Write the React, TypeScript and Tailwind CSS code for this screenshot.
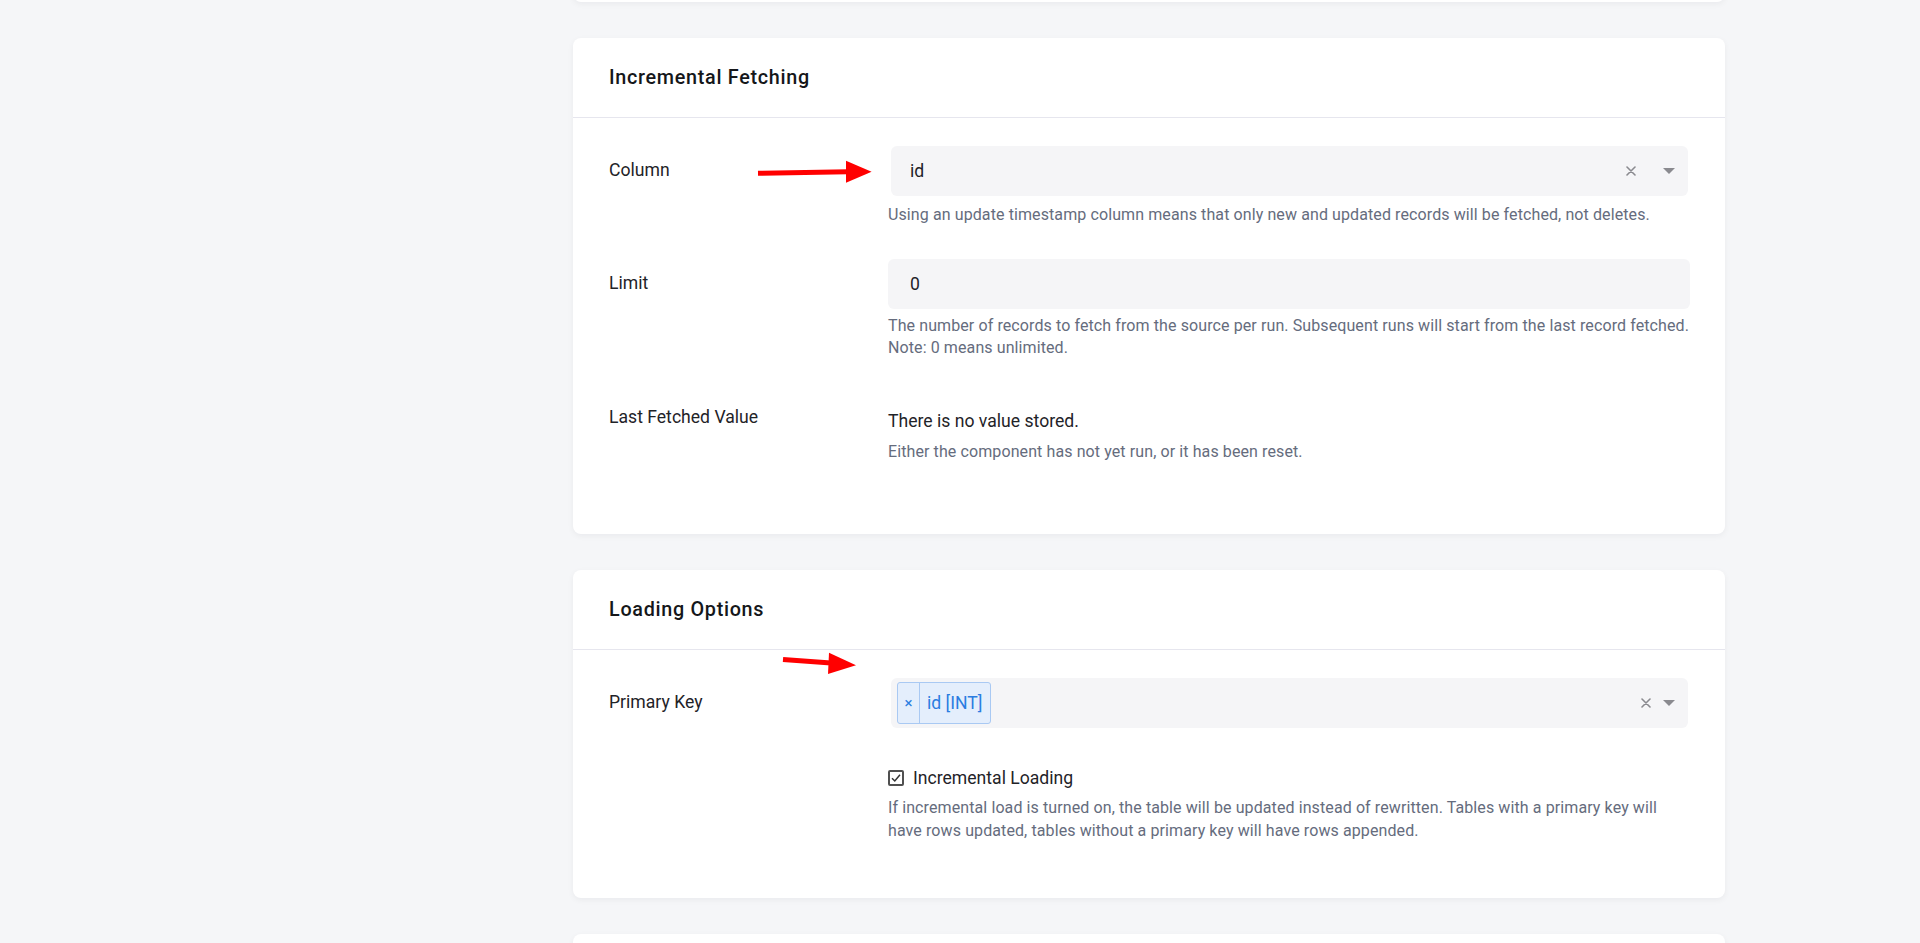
import React from "react";

function XIcon() {
  return (
    <svg width="10" height="10" viewBox="0 0 10 10" className="shrink-0">
      <path d="M1 1L9 9M9 1L1 9" stroke="#8a8a8f" strokeWidth="1.6" strokeLinecap="round" />
    </svg>
  );
}

function Caret() {
  return (
    <svg width="12" height="6" viewBox="0 0 12 6" className="shrink-0">
      <path d="M0 0H12L6 6Z" fill="#8a8a8f" />
    </svg>
  );
}

function Card({ title, children, bodyClass }: { title: string; children: React.ReactNode; bodyClass: string }) {
  return (
    <div className="relative rounded-lg bg-white shadow-[0_2px_6px_rgba(20,20,40,0.05)]">
      <div className="flex h-[79px] items-center border-b border-[#e6e6ee] px-9 box-content">
        <h2 className="text-[19.8px] font-medium tracking-[0.7px] text-[#15171a]">{title}</h2>
      </div>
      <div className={bodyClass}>{children}</div>
    </div>
  );
}

function Row({ label, children, className }: { label: string; children: React.ReactNode; className?: string }) {
  return (
    <div className={"flex " + (className ?? "")}>
      <div className="w-[279px] shrink-0 pt-[12px] text-[17.6px] leading-6 text-[#1f2328]">{label}</div>
      <div className="min-w-0 flex-1">{children}</div>
    </div>
  );
}

export default function App() {
  return (
    <div className="h-[943px] w-full overflow-hidden bg-[#f5f6f8] font-['Roboto',sans-serif]">
      <div className="flex">
        <div className="w-[573px] shrink-0" />
        <div className="flex w-[1152px] flex-col gap-9">
          <div className="-mt-[37px] h-[39px] rounded-lg bg-white shadow-[0_2px_6px_rgba(20,20,40,0.05)]" />

          <Card title="Incremental Fetching" bodyClass="pl-9 pr-[35px] pt-[28px] pb-[71px]">
            <Row label="Column">
              <div className="ml-[3px] mr-[2px] flex h-[50px] items-center rounded-md bg-[#f5f5f7] pl-[19px] pr-[13px]">
                <span className="flex-1 text-[17.6px] text-[#1f2328]">id</span>
                <XIcon />
                <span className="w-[27px]" />
                <Caret />
              </div>
              <p className="mt-2 text-[16px] leading-[22px] tracking-[0.1px] text-[#656c7d]">
                Using an update timestamp column means that only new and updated records will be fetched, not deletes.
              </p>
            </Row>
            <Row label="Limit" className="mt-[33px]">
              <div className="flex h-[50px] items-center rounded-md bg-[#f5f5f7] pl-[22px] text-[17.6px] text-[#1f2328]">0</div>
              <p className="mt-[6px] whitespace-nowrap text-[16px] leading-[22px] tracking-[0.1px] text-[#656c7d]">
                The number of records to fetch from the source per run. Subsequent runs will start from the last record fetched.
                <br />
                Note: 0 means unlimited.
              </p>
            </Row>
            <Row label="Last Fetched Value" className="mt-[34px]">
              <div className="pt-4 text-[17.6px] leading-6 text-[#1f2328]">There is no value stored.</div>
              <p className="mt-2 text-[16px] leading-[22px] tracking-[0.1px] text-[#656c7d]">
                Either the component has not yet run, or it has been reset.
              </p>
            </Row>

            <svg className="pointer-events-none absolute left-[180px] top-[118px]" width="125" height="35" viewBox="0 0 125 35">
              <path d="M5 17.3L95 15.7" stroke="#ff0000" strokeWidth="5" />
              <path d="M93 4.7L118.6 15.7L93 26.7Z" fill="#ff0000" />
            </svg>
          </Card>

          <Card title="Loading Options" bodyClass="pl-9 pr-[35px] pt-[28px] pb-[56px]">
            <Row label="Primary Key">
              <div className="ml-[3px] mr-[2px] flex h-[50px] items-center rounded-md bg-[#f5f5f7] pl-[6px] pr-[13px]">
                <div className="flex h-[42px] items-stretch rounded-[3px] border border-[#a9c9f3] bg-[#e4eefc] text-[#2a7de1]">
                  <span className="flex w-[22px] items-center justify-center border-r border-[#a9c9f3] text-[15px]">×</span>
                  <span className="flex items-center pl-[7px] pr-[8px] text-[17.6px]">id [INT]</span>
                </div>
                <span className="flex-1" />
                <XIcon />
                <span className="w-[12px]" />
                <Caret />
              </div>
            </Row>
            <div className="mt-[38px] flex">
              <div className="w-[279px] shrink-0" />
              <div className="min-w-0 flex-1">
                <div className="flex items-center gap-[9px]">
                  <svg width="16" height="16" viewBox="0 0 16 16" className="shrink-0">
                    <rect x="1" y="1" width="14" height="14" rx="1" fill="#fff" stroke="#505050" strokeWidth="2" />
                    <path d="M4 8.2L6.8 11L12 4.8" fill="none" stroke="#333" strokeWidth="1.5" />
                  </svg>
                  <span className="text-[17.6px] leading-6 text-[#1f2328]">Incremental Loading</span>
                </div>
                <p className="mt-[7px] whitespace-nowrap text-[16px] leading-[22.5px] tracking-[0.1px] text-[#656c7d]">
                  If incremental load is turned on, the table will be updated instead of rewritten. Tables with a primary key will
                  <br />
                  have rows updated, tables without a primary key will have rows appended.
                </p>
              </div>
            </div>

            <svg className="pointer-events-none absolute left-[205px] top-[78px]" width="85" height="30" viewBox="0 0 85 30">
              <path d="M5 11.5L53 15" stroke="#ff0000" strokeWidth="5" />
              <path d="M51 4.7L78 17.3L50 26Z" fill="#ff0000" />
            </svg>
          </Card>

          <div className="h-[200px] rounded-lg bg-white shadow-[0_2px_6px_rgba(20,20,40,0.05)]" />
        </div>
      </div>
    </div>
  );
}
